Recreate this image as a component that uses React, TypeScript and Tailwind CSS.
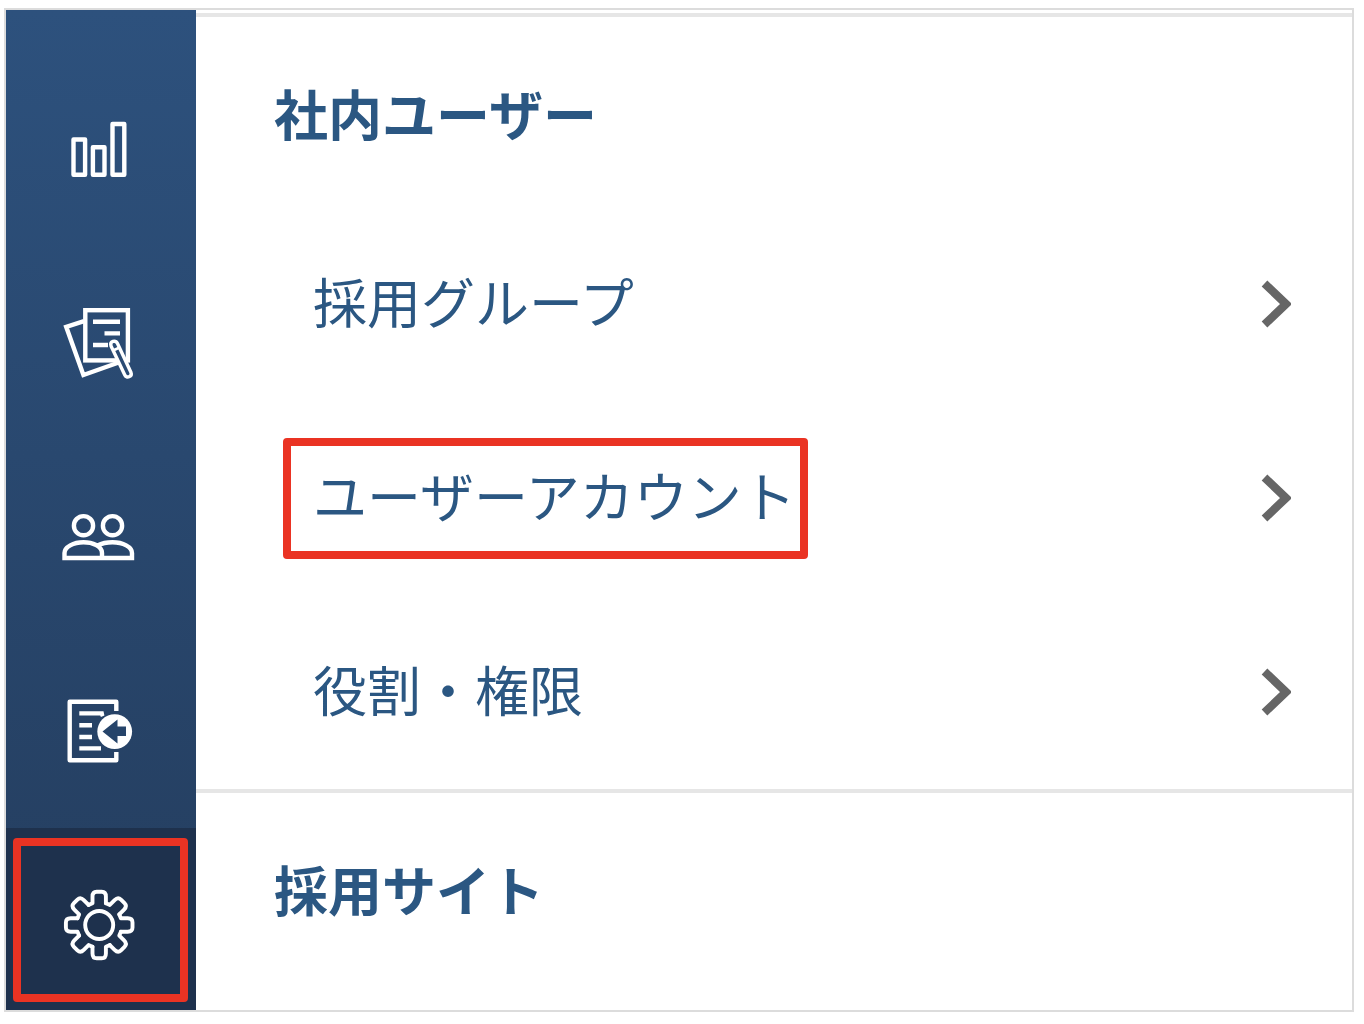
import type { ReactNode } from 'react';

interface IconProps {
    children: ReactNode;
}

interface MenuSectionProps {
    title: string;
    items: { label: string; highlighted?: boolean }[];
}

function Icon({ children }: IconProps) {
    return (
        <svg
            viewBox="0 0 100 100"
            className="size-[100px] shrink-0"
            fill="none"
            stroke="white"
            strokeWidth="4.4"
            aria-hidden="true"
        >
            {children}
        </svg>
    );
}

function ReportIcon() {
    return (
        <Icon>
            <g strokeLinejoin="round">
                <rect x="22.5" y="40.5" width="11.6" height="35.2" />
                <rect x="41.9" y="48.3" width="11.6" height="27.4" />
                <rect x="61.5" y="25" width="11.8" height="50.7" />
            </g>
        </Icon>
    );
}

function DocumentIcon() {
    return (
        <Icon>
            <path d="M33 28.2L15.2 33.8L32.4 82L67 69.8" />
            <rect x="34.3" y="17.2" width="42.6" height="50.2" />
            <path d="M42 28.8H69M53.5 40.4H69M42 52H57" />
            <path
                d="M60 53C58.5 48 64.5 46.5 66.5 50.5L80 79.5C81.5 83.5 75.5 86 73.8 82Z"
                fill="#2a4b74"
                strokeWidth="3.4"
                strokeLinejoin="round"
            />
            <path d="M62 57.5L67.5 55" strokeWidth="2.5" />
        </Icon>
    );
}

function UsersIcon() {
    return (
        <Icon>
            <circle cx="32.5" cy="38.7" r="9.6" />
            <circle cx="61.5" cy="38.7" r="9.6" />
            <path d="M51 71V66C51 59 41.5 55.3 32.5 55.3C22.5 55.3 13.5 60 13.5 66V71H81V66C81 60 72 55.3 61.5 55.3C55.5 55.3 50.5 56.5 46.5 58.5" />
        </Icon>
    );
}

function ImportIcon() {
    return (
        <Icon>
            <path d="M65.3 30V20.7H18.7V79.3H65.3V71" strokeLinejoin="round" />
            <path d="M28.3 32.4H52.5L49 34M28.3 44.2H41M28.3 56H41M28.3 67.4H50" />
            <circle cx="63.7" cy="50.6" r="17.4" fill="white" stroke="none" />
            <path d="M51.5 50.4L66.5 38.5V45.6H75V55H66.5V62.5Z" fill="#26446a" stroke="none" />
        </Icon>
    );
}

function SettingsIcon() {
    return (
        <Icon>
            <g transform="translate(48.2 55)" strokeWidth="3.9" strokeLinejoin="round" strokeLinecap="round">
                <circle r="14" />
                {[0, 45, 90, 135, 180, 225, 270, 315].map((angle) => (
                    <path
                        key={angle}
                        transform={`rotate(${angle})`}
                        d="M-10.6 -20.1L-6.7 -21.7V-28.5Q-6.7 -33.3 -2.5 -33.3H2.5Q6.7 -33.3 6.7 -28.5V-21.7"
                    />
                ))}
            </g>
        </Icon>
    );
}

const navItems = [
    { label: 'レポート', icon: <ReportIcon /> },
    { label: '書類', icon: <DocumentIcon /> },
    { label: 'ユーザー', icon: <UsersIcon /> },
    { label: '取り込み', icon: <ImportIcon /> },
];

function Sidebar() {
    return (
        <nav className="flex w-[190px] shrink-0 flex-col bg-linear-to-b from-[#2d517d] to-[#243d5e] pt-[42px]">
            {navItems.map((item) => (
                <button key={item.label} aria-label={item.label} className="flex h-[194px] items-center justify-center">
                    {item.icon}
                </button>
            ))}
            <button aria-label="設定" className="flex flex-1 bg-[#1e314d] pt-[10px] pr-2 pb-2 pl-[7px]">
                <span className="flex h-[164px] flex-1 items-center justify-center rounded border-8 border-[#ea3323]">
                    <SettingsIcon />
                </span>
            </button>
        </nav>
    );
}

function MenuSection({ title, items }: MenuSectionProps) {
    return (
        <section className="border-t-4 border-[#e6e6e6]">
            <h2 className="flex h-[190px] items-center pl-[78px] font-bold">{title}</h2>
            {items.map((item) => (
                <a key={item.label} href="#" className="flex h-[194px] items-center justify-between pr-[61px] pl-[87px]">
                    <span
                        className={`rounded border-8 pt-2 pr-1 pb-4 pl-[22px] leading-[81px] ${
                            item.highlighted ? 'border-[#ea3323]' : 'border-transparent'
                        }`}
                    >
                        {item.label}
                    </span>
                    <svg viewBox="0 0 30 48" className="h-12 w-[30px]" fill="none" stroke="#666" strokeWidth="8.2" aria-hidden="true">
                        <path d="M3.5 3.5L25 24L3.5 44.5" />
                    </svg>
                </a>
            ))}
        </section>
    );
}

export default function App() {
    return (
        <div className="bg-white pt-2 pr-[10px] pb-3 pl-1">
            <div className="flex border-2 border-[#dcdcdc]">
                <Sidebar />
                <main className="flex-1 pt-[3px] font-['Noto_Sans_CJK_JP',sans-serif] text-[54px] text-[#2b5782]">
                    <MenuSection
                        title="社内ユーザー"
                        items={[
                            { label: '採用グループ' },
                            { label: 'ユーザーアカウント', highlighted: true },
                            { label: '役割・権限' },
                        ]}
                    />
                    <MenuSection title="採用サイト" items={[]} />
                </main>
            </div>
        </div>
    );
}
